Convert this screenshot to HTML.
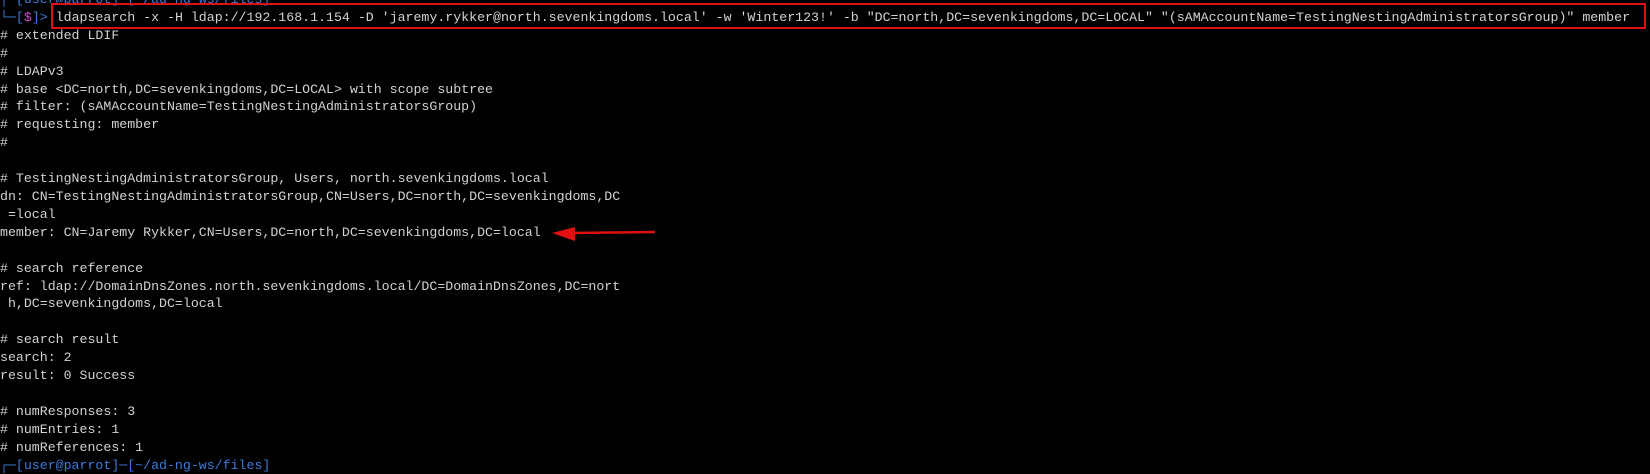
<!DOCTYPE html>
<html><head><meta charset="utf-8"><style>
html,body{margin:0;padding:0;background:#000;width:1650px;height:460px;overflow:hidden;}
#t{position:absolute;left:0;top:-9px;font-family:"Liberation Mono",monospace;font-size:13.25px;line-height:17.9px;color:#d2d2d2;white-space:pre;}
.b{color:#3d7bd8}.p{color:#c74fc7}
#box{position:absolute;left:51px;top:3px;width:1591px;height:22px;border:2px solid #e01010;}
</style></head><body>
<div id="t"><span class="b">│ [user@parrot]─[~/ad-ng-ws/files]</span>
<span class="b">└─[</span><span class="p">$</span><span class="b">]&gt;</span> ldapsearch -x -H ldap://192.168.1.154 -D 'jaremy.rykker@north.sevenkingdoms.local' -w 'Winter123!' -b "DC=north,DC=sevenkingdoms,DC=LOCAL" "(sAMAccountName=TestingNestingAdministratorsGroup)" member
# extended LDIF
#
# LDAPv3
# base &lt;DC=north,DC=sevenkingdoms,DC=LOCAL&gt; with scope subtree
# filter: (sAMAccountName=TestingNestingAdministratorsGroup)
# requesting: member
#

# TestingNestingAdministratorsGroup, Users, north.sevenkingdoms.local
dn: CN=TestingNestingAdministratorsGroup,CN=Users,DC=north,DC=sevenkingdoms,DC
 =local
member: CN=Jaremy Rykker,CN=Users,DC=north,DC=sevenkingdoms,DC=local

# search reference
ref: ldap://DomainDnsZones.north.sevenkingdoms.local/DC=DomainDnsZones,DC=nort
 h,DC=sevenkingdoms,DC=local

# search result
search: 2
result: 0 Success

# numResponses: 3
# numEntries: 1
# numReferences: 1
<span class="b">┌─[user@parrot]─[~/ad-ng-ws/files]</span></div>
<div id="box"></div>
<svg style="position:absolute;left:0;top:0" width="1650" height="460">
<line x1="570" y1="233" x2="655" y2="232" stroke="#e01010" stroke-width="2.5"/>
<polygon points="552,233 575,227 575,241" fill="#e01010"/>
</svg>
</body></html>
